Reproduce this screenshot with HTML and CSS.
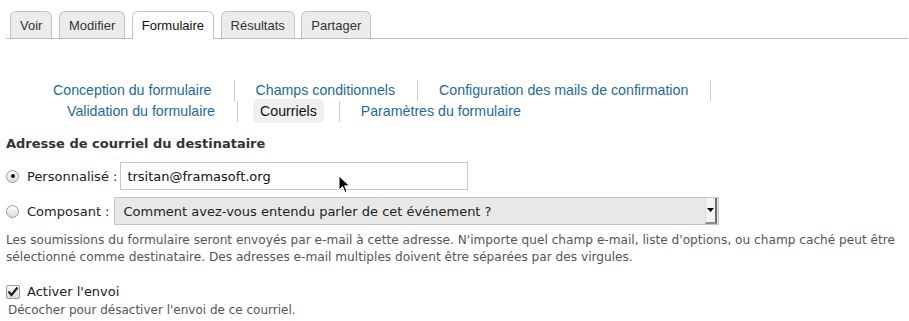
FILE: index.html
```html
<!DOCTYPE html>
<html lang="fr">
<head>
<meta charset="utf-8">
<title>Courriels</title>
<link rel="stylesheet" href="styles.css">
</head>
<body>
<div class="tabs">
  <a class="tab">Voir</a>
  <a class="tab">Modifier</a>
  <a class="tab active">Formulaire</a>
  <a class="tab">Résultats</a>
  <a class="tab">Partager</a>
</div>

<nav class="subnav">
  <ul class="row row1">
    <li class="sep">Conception du formulaire</li>
    <li class="sep">Champs conditionnels</li>
    <li class="sep">Configuration des mails de confirmation</li>
  </ul>
  <ul class="row row2">
    <li class="sep">Validation du formulaire</li>
    <li class="sep current"><span class="pill">Courriels</span></li>
    <li>Paramètres du formulaire</li>
  </ul>
</nav>

<form class="form">
  <h3 class="heading">Adresse de courriel du destinataire</h3>
  <div class="field-row r1">
    <span class="radio checked"></span>
    <span class="label">Personnalisé :</span>
    <span class="textbox">trsitan@framasoft.org</span>
  </div>
  <div class="field-row r2">
    <span class="radio"></span>
    <span class="label">Composant :</span>
    <span class="select"><span class="select-text">Comment avez-vous entendu parler de cet événement ?</span><span class="select-btn"><svg width="7" height="4" viewBox="0 0 7 4"><path d="M0 0h7L3.5 4z" fill="#000"/></svg></span></span>
  </div>
  <p class="desc">Les soumissions du formulaire seront envoyés par e-mail à cette adresse. N'importe quel champ e-mail, liste d'options, ou champ caché peut être sélectionné comme destinataire. Des adresses e-mail multiples doivent être séparées par des virgules.</p>
  <div class="check-row">
    <span class="checkbox"><svg width="12" height="11" viewBox="0 0 12 11"><path d="M1.5 5.5 L4.5 9 L10.5 1.5" fill="none" stroke="#222" stroke-width="2.2"/></svg></span>
    <span class="label">Activer l'envoi</span>
  </div>
  <p class="desc2">Décocher pour désactiver l'envoi de ce courriel.</p>
</form>

<svg class="pointer" width="13" height="20" viewBox="0 0 13 20"><path d="M1 1 L1 15 L4.5 11.5 L7 17.5 L9 16.6 L6.6 10.8 L11.5 10.8 Z" fill="#000" stroke="#fff" stroke-width="1"/></svg>
</body>
</html>
```
FILE: styles.css
```css
html, body {
  margin: 0;
  padding: 0;
  background: #fff;
}
body {
  position: relative;
  width: 909px;
  height: 321px;
  overflow: hidden;
  font-family: "DejaVu Sans", Verdana, sans-serif;
}
.tabs {
  display: flex;
  gap: 6.6px;
  margin: 0 1px 0 6px;
  padding: 11px 0 0 4px;
  border-bottom: 1px solid #bbb;
  height: 27px;
  box-sizing: content-box;
}
.tab {
  display: flex;
  align-items: center;
  height: 27px;
  box-sizing: border-box;
  padding: 0 9px;
  background: #ececec;
  border: 1px solid #c4c4c4;
  border-bottom: none;
  border-radius: 6px 6px 0 0;
  font-family: "Liberation Sans", Arial, sans-serif;
  font-size: 13px;
  color: #333;
}
.tab.active {
  background: #fff;
  color: #111;
  height: 28px;
  margin-bottom: -1px;
  padding-bottom: 1px;
}
.subnav {
  margin-top: 41px;
  font-family: "Liberation Sans", Arial, sans-serif;
  font-size: 14.2px;
  color: #1f6a98;
}
.row {
  list-style: none;
  margin: 0;
  display: flex;
}
.row1 { padding: 0 0 0 32px; }
.row2 { padding: 0 0 0 46px; }
.row li {
  height: 21px;
  line-height: 21px;
  padding: 0 22px 0 21px;
}
.row li.sep { border-right: 1px solid #ccc; }
.row li.current {
  padding: 0 15px 0 15px;
  display: flex;
  align-items: center;
}
.pill {
  display: block;
  background: #f0f0f0;
  color: #111;
  border-radius: 5px;
  padding: 0 7px;
  height: 24px;
  line-height: 24px;
  margin-top: -2px;
  margin-bottom: -1px;
}
.form {
  padding: 0 0 0 6px;
}
.heading {
  margin: 14px 0 0;
  font-size: 13px;
  font-weight: bold;
  color: #333;
  line-height: 16px;
}
.field-row {
  display: flex;
  align-items: center;
  font-size: 13px;
  color: #222;
}
.r1 { margin-top: 10px; }
.r2 { margin-top: 7px; }
.radio {
  width: 13px;
  height: 13px;
  box-sizing: border-box;
  border-radius: 50%;
  border: 1px solid #9a9a9a;
  background: linear-gradient(#fdfdfd, #dcdcdc);
  margin-right: 8px;
  position: relative;
  flex: none;
}
.radio.checked::after {
  content: "";
  position: absolute;
  left: 3.5px;
  top: 3.5px;
  width: 4px;
  height: 4px;
  border-radius: 50%;
  background: #111;
}
.label { white-space: nowrap; }
.textbox {
  margin-left: 3px;
  width: 348px;
  height: 28px;
  box-sizing: border-box;
  border: 1px solid #c8c8c8;
  padding: 0 6px;
  display: flex;
  align-items: center;
  color: #111;
}
.select {
  margin-left: 4px;
  width: 605px;
  height: 28px;
  box-sizing: border-box;
  border: 1px solid #c4c4c4;
  background: #e8e8e8;
  display: flex;
  align-items: center;
  justify-content: space-between;
  padding: 0 1px 0 9px;
}
.select-text { color: #222; }
.select-btn {
  width: 12px;
  height: 26px;
  box-sizing: border-box;
  background: #f2f2f2;
  border-right: 2px solid #6c6c6c;
  border-bottom: 2px solid #8c8c8c;
  border-left: 1px solid #ddd;
  display: flex;
  align-items: center;
  justify-content: center;
}
.desc {
  margin: 7px 0 0;
  font-size: 12.15px;
  line-height: 17px;
  color: #555;
}
.check-row {
  display: flex;
  align-items: center;
  margin-top: 18px;
  font-size: 13px;
  color: #222;
}
.checkbox {
  width: 14px;
  height: 14px;
  box-sizing: border-box;
  border: 1px solid #999;
  border-radius: 2px;
  background: linear-gradient(#fdfdfd, #dedede);
  margin-right: 7px;
  display: flex;
  align-items: center;
  justify-content: center;
}
.desc2 {
  margin: 3px 0 0 2px;
  font-size: 12px;
  line-height: 16px;
  color: #555;
}
.pointer {
  position: absolute;
  left: 338px;
  top: 175px;
}
```
